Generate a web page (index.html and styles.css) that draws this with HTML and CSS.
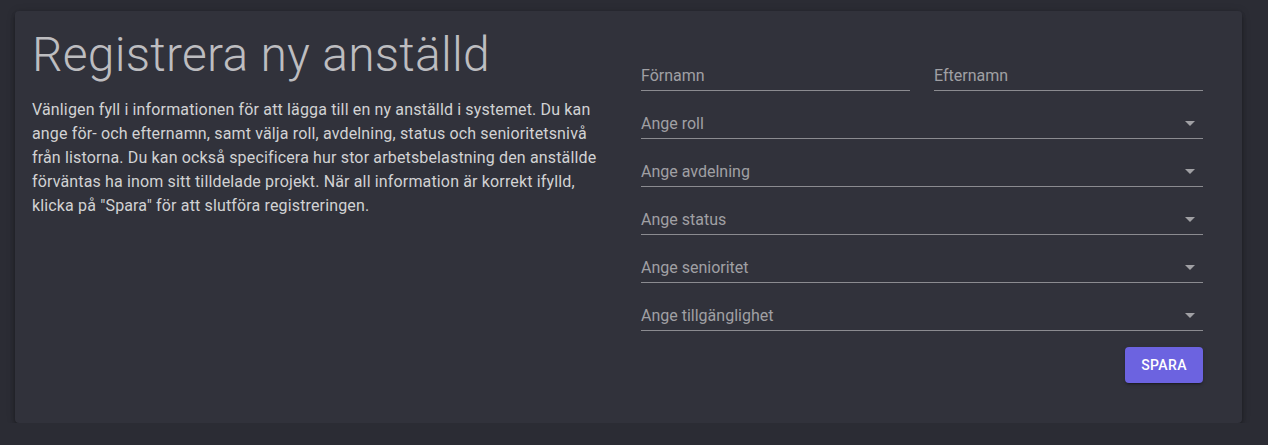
FILE: index.html
```html
<!DOCTYPE html>
<html lang="sv">
<head>
<meta charset="utf-8">
<link rel="stylesheet" href="styles.css">
<title>Registrera ny anställd</title>
</head>
<body>
<div class="card">
  <div class="intro">
    <h1 class="title">Registrera ny anställd</h1>
    <p class="desc">Vänligen fyll i informationen för att lägga till en ny anställd i systemet. Du kan ange för- och efternamn, samt välja roll, avdelning, status och senioritetsnivå från listorna. Du kan också specificera hur stor arbetsbelastning den anställde förväntas ha inom sitt tilldelade projekt. När all information är korrekt ifylld, klicka på "Spara" för att slutföra registreringen.</p>
  </div>
  <form class="form">
    <div class="row">
      <label class="field"><span class="label">Förnamn</span></label>
      <label class="field"><span class="label">Efternamn</span></label>
    </div>
    <div class="field select"><span class="label">Ange roll</span><span class="arrow"></span></div>
    <div class="field select"><span class="label">Ange avdelning</span><span class="arrow"></span></div>
    <div class="field select"><span class="label">Ange status</span><span class="arrow"></span></div>
    <div class="field select"><span class="label">Ange senioritet</span><span class="arrow"></span></div>
    <div class="field select"><span class="label">Ange tillgänglighet</span><span class="arrow"></span></div>
    <div class="actions"><button type="button" class="btn">SPARA</button></div>
  </form>
</div>
</body>
</html>
```
FILE: styles.css
```css
* { box-sizing: border-box; }
html, body { margin: 0; padding: 0; }
body {
  background: #2b2c34;
  font-family: Roboto, "Liberation Sans", sans-serif;
  padding: 11px 26px 0 15px;
}
.card {
  background: #31323b;
  border-radius: 4px;
  box-shadow: 0 2px 4px -1px rgba(0,0,0,0.25), 0 4px 5px 0 rgba(0,0,0,0.16), 0 1px 10px 0 rgba(0,0,0,0.14);
  display: grid;
  grid-template-columns: 585px 562px;
  column-gap: 24px;
  padding: 16px 39px 40px 17px;
  height: 412px;
}
.title {
  margin: 0;
  font-weight: 300;
  font-size: 48px;
  line-height: 56px;
  color: #bdbdc0;
  letter-spacing: 0.25px;
}
.desc {
  margin: 15px 0 0;
  font-size: 16px;
  line-height: 24px;
  letter-spacing: 0.15px;
  color: #d2d2d4;
}
.form {
  display: flex;
  flex-direction: column;
  padding-top: 20px;
}
.row {
  display: flex;
  gap: 24px;
}
.row .field { flex: 1; }
.field {
  display: flex;
  align-items: center;
  height: 44px;
  border-bottom: 1px solid #8b8b90;
  position: relative;
  margin-bottom: 4px;
}
.label {
  font-size: 16px;
  color: #a0a0a4;
  padding-top: 14px;
}
.arrow {
  position: absolute;
  right: 8px;
  top: 26px;
  width: 0; height: 0;
  border-left: 5px solid transparent;
  border-right: 5px solid transparent;
  border-top: 5px solid #a0a0a4;
}
.actions {
  display: flex;
  justify-content: flex-end;
  margin-top: 12px;
}
.btn {
  width: 78px;
  height: 36px;
  border: 0;
  border-radius: 4px;
  background: #6c63e0;
  color: #fff;
  font-family: Roboto, "Liberation Sans", sans-serif;
  font-weight: 500;
  font-size: 14px;
  letter-spacing: 0.4px;
  box-shadow: 0 3px 1px -2px rgba(0,0,0,0.2), 0 2px 2px 0 rgba(0,0,0,0.14), 0 1px 5px 0 rgba(0,0,0,0.12);
}
```
